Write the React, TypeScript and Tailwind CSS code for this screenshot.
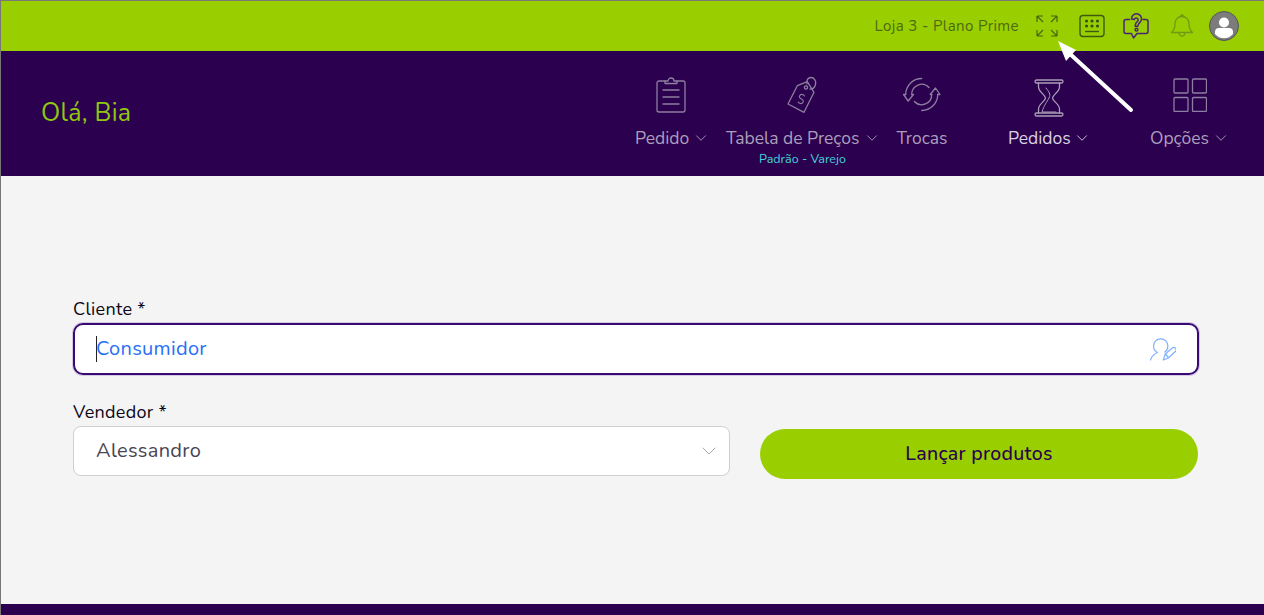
import React from "react";
import { ChevronDown } from "lucide-react";

const font = "font-['Nunito','Noto_Sans','Open_Sans',sans-serif]";

function NavItem({ icon, label, chevron = true, bright = false, sub, className = "" }: { icon: React.ReactNode; label: string; chevron?: boolean; bright?: boolean; sub?: string; className?: string }) {
  return (
    <div className={`relative flex flex-col items-center ${className}`}>
      <div className="h-[44px] flex items-center justify-center">{icon}</div>
      <div className={`mt-[9px] flex items-center w-full text-[17.5px] leading-[24px] whitespace-nowrap ${bright ? "text-[#d9d2e3]" : "text-[#ab9fba]"} ${chevron ? "justify-between" : "justify-center"}`}>
        <span>{label}</span>
        {chevron && <ChevronDown size={18} strokeWidth={1.2} className="-mr-[4px]" />}
      </div>
      {sub && <div className="absolute top-[78px] left-[2px] right-0 text-center text-[12.5px] leading-[16px] text-[#45d5dc] whitespace-nowrap">{sub}</div>}
    </div>
  );
}

const stroke = { fill: "none", stroke: "#8d7fa0", strokeWidth: 1.3, strokeLinecap: "round" as const, strokeLinejoin: "round" as const };

export default function App() {
  return (
    <div className="relative h-[615px] w-[1264px] overflow-hidden border-t border-l border-[#777777] bg-[#f4f4f4] flex flex-col font-['Lato','Noto_Sans',sans-serif]">
      <header className="h-[50px] bg-[#99cf00] flex items-center justify-end pr-[25px] shrink-0">
        <span className={`text-[15px] tracking-[0.4px] text-[#4d6a12] mr-[16px] ${font}`}>Loja 3 - Plano Prime</span>
        <svg width="24" height="24" viewBox="0 0 24 24" className="mr-[20px]" fill="none" stroke="#4a6512" strokeWidth="1.2">
          <path d="M2 2h6M2 2v6M2 2l6 6M22 2h-6M22 2v6M22 2l-6 6M2 22h6M2 22v-6M2 22l6-6M22 22h-6M22 22v-6M22 22l-6-6" />
        </svg>
        <svg width="26" height="24" viewBox="0 0 26 24" className="mr-[18px]" fill="none">
          <rect x="1" y="1.5" width="24" height="21" rx="3" stroke="#3f5a10" strokeWidth="1.4" />
          <g fill="#3a5210">
            <circle cx="7.5" cy="7" r="1.6" /><circle cx="13" cy="7" r="1.6" /><circle cx="18.5" cy="7" r="1.6" />
            <circle cx="7.5" cy="12" r="1.6" /><circle cx="13" cy="12" r="1.6" /><circle cx="18.5" cy="12" r="1.6" />
          </g>
          <path d="M6 17.5h14" stroke="#3f5a10" strokeWidth="1.4" />
        </svg>
        <svg width="26" height="26" viewBox="0 0 26 26" className="mr-[21px]" fill="none" stroke="#4a2378" strokeWidth="1.5" strokeLinecap="round" strokeLinejoin="round">
          <path d="M6.500 6.500H3a2 2 0 0 0-2 2v10a2 2 0 0 0 2 2h5.500l2 4.500 3.500-4.500h9a2 2 0 0 0 2-2v-10a2 2 0 0 0-2-2h-3" />
          <path d="M8.500 6a5 5 0 1 1 8.200 3.700c-1.300 1.100-1.800 1.700-1.800 3.600h-2.800c0-2.800.9-3.800 2.300-4.900a1.900 1.900 0 1 0-3-1.900z" />
          <circle cx="13.500" cy="16.700" r="1.400" />
        </svg>
        <svg width="24" height="26" viewBox="0 0 24 26" className="mr-[15px]" fill="none" stroke="#6f9a18" strokeWidth="1.3" strokeLinejoin="round">
          <path d="M12 3.500c-4.500 0-7 3.200-7 7.500 0 5-1.300 6.500-3.500 8.500h21c-2.200-2-3.500-3.500-3.500-8.500 0-4.300-2.500-7.500-7-7.500z" />
          <path d="M10.500 3.500a1.500 1.500 0 0 1 3 0M9 20c.3 2 1.500 3.200 3 3.200s2.700-1.200 3-3.200" />
        </svg>
        <svg width="30" height="30" viewBox="0 0 30 30">
          <circle cx="15" cy="15" r="14.500" fill="#7c7c7c" stroke="#555555" strokeWidth="1" />
          <circle cx="15" cy="11.500" r="5" fill="#ffffff" />
          <path d="M6 20.500c0-2.500 2-3.500 4-3.500h10c2 0 4 1 4 3.500V23a11.500 11.500 0 0 1-18 0z" fill="#ffffff" />
        </svg>
      </header>

      <section className={`h-[125px] bg-[#2b004f] flex items-start shrink-0 ${font}`}>
        <h1 className="ml-[40px] mt-[46px] text-[25px] leading-[32px] tracking-[0.3px] font-normal text-[#8fc90f]">Olá, Bia</h1>
        <nav className="ml-auto mr-[38px] mt-[22px] flex items-start">
          <NavItem
            className="w-[71px]"
            label="Pedido"
            icon={
              <svg width="32" height="38" viewBox="0 0 32 38" {...stroke}>
                <path d="M10 5H4a2 2 0 0 0-2 2v27a2 2 0 0 0 2 2h24a2 2 0 0 0 2-2V7a2 2 0 0 0-2-2h-6" />
                <path d="M10 7V5h3a3 3 0 0 1 6 0h3v2.500H10z" />
                <path d="M8 14h16M8 21h16M8 28h16" />
              </svg>
            }
          />
          <NavItem
            className="w-[151px] ml-[20px]"
            label="Tabela de Preços"
            sub="Padrão - Varejo"
            icon={
              <svg width="32" height="38" viewBox="0 0 32 38" {...stroke}>
                <path d="M11.300 9.700L2 28l16 8.300L28 16.300 21.300 5.700z" />
                <circle cx="20" cy="11.500" r="1.600" />
                <path d="M21 8c-1-3.500 1-6.500 4-6.500s5.500 3.500 4.500 7-3 5-5.500 4.500" />
                <path d="M18.500 20c-.8-1.700-3.400-2.200-4.600-.7s0 3 1.500 3.700 2.500 2.200 1.400 3.700-3.700 1-4.500-.7" strokeWidth="1.100" />
              </svg>
            }
          />
          <NavItem
            className="w-[50px] ml-[20px]"
            label="Trocas"
            chevron={false}
            icon={
              <svg width="38" height="36" viewBox="0 0 38 36" {...stroke}>
                <path d="M18.700 1.500A16 16 0 0 0 2.700 17.500M26 10.500A10 10 0 0 0 8.700 17.500" />
                <path d="M2.700 17.500H.5l4.700 6.500 5.300-6.500H8.700" />
                <path d="M18.700 33.500A16 16 0 0 0 34.700 17.500M11.400 24.500A10 10 0 0 0 28.700 17.500" />
                <path d="M34.700 17.500h2.300l-4.500-6.500-5.300 6.500h1.500" />
              </svg>
            }
          />
          <NavItem
            className="w-[79px] ml-[61px]"
            label="Pedidos"
            bright
            icon={
              <svg width="30" height="38" viewBox="0 0 30 38" className="mt-[6px] ml-[2px]" {...stroke} stroke="#a99db8">
                <rect x="1" y="1" width="28" height="3" rx="1.500" />
                <rect x="1" y="34" width="28" height="3" rx="1.500" />
                <path d="M4.500 4v4c0 5 7 8 7 11s-7 6-7 11v4M25.500 4v4c0 5-7 8-7 11s7 6 7 11v4" />
                <path d="M12 9c3 4 5 6 3 10s-5 7-7 14h14" strokeWidth="1" />
              </svg>
            }
          />
          <NavItem
            className="w-[76px] ml-[63px]"
            label="Opções"
            icon={
              <svg width="34" height="34" viewBox="0 0 34 34" className="ml-[4px]" {...stroke}>
                <rect x="1" y="1" width="14" height="14" rx="1" />
                <rect x="19.500" y="1" width="14" height="14" rx="1" />
                <rect x="1" y="19.500" width="14" height="14" rx="1" />
                <rect x="19.500" y="19.500" width="14" height="14" rx="1" />
              </svg>
            }
          />
        </nav>
      </section>

      <main className={`flex-1 pl-[72px] pr-[64px] pt-[122px] ${font}`}>
        <label className="block text-[18px] leading-[22px] tracking-[0.3px] text-[#0d0616]">Cliente *</label>
        <div className="mt-[3px] w-[1126px] h-[52px] rounded-[10px] border-2 border-[#3a0a73] bg-white flex items-center pl-[21px] pr-[21px] shadow-[0_0_0_1px_#d5c8e4]">
          <span className="w-px h-[26px] bg-[#222222] -mr-px" />
          <span className="flex-1 text-[20px] tracking-[0.3px] text-[#2a70f5]">Consumidor</span>
          <svg width="26" height="23" viewBox="0 0 26 23" fill="none" stroke="#7fb0ff" strokeWidth="1.2" strokeLinecap="round" strokeLinejoin="round">
            <path d="M.5 22c1.200-3.500 3-6 7-7.500-2.500-1.200-4-3.500-4-6.500a7.200 7.200 0 0 1 14.400 0c0 2.500-1 4.700-3 6" />
            <path d="M13.300 22l2-6 7-6a2 2 0 0 1 3 3.500l-7 6.500z" />
            <path d="M15.300 16l3 3.500" />
          </svg>
        </div>
        <label className="mt-[26px] block text-[18px] leading-[22px] tracking-[0.3px] text-[#0d0616]">Vendedor *</label>
        <div className="mt-[3px] flex items-start">
          <div className="w-[657px] h-[50px] rounded-[8px] border border-[#cfcfcf] bg-white flex items-center justify-between pl-[22px] pr-[8px] shrink-0">
            <span className="text-[20px] tracking-[0.3px] text-[#4a4452]">Alessandro</span>
            <ChevronDown size={24} strokeWidth={1} className="text-[#aaaaaa]" />
          </div>
          <button className="ml-[30px] mt-[3px] w-[438px] h-[50px] rounded-full bg-[#99cf00] text-[19.5px] tracking-[0.3px] font-medium text-[#2b004f] shrink-0">Lançar produtos</button>
        </div>
      </main>

      <footer className="h-[11px] bg-[#2b004f] shrink-0" />

      <svg className="absolute left-[-1px] top-[-1px] pointer-events-none" width="1264" height="120" viewBox="0 0 1264 120">
        <path d="M1131 110L1069 53" stroke="#ffffff" strokeWidth="4" strokeLinecap="round" />
        <path d="M1058 41L1076 50L1066 61z" fill="#ffffff" />
      </svg>
    </div>
  );
}
